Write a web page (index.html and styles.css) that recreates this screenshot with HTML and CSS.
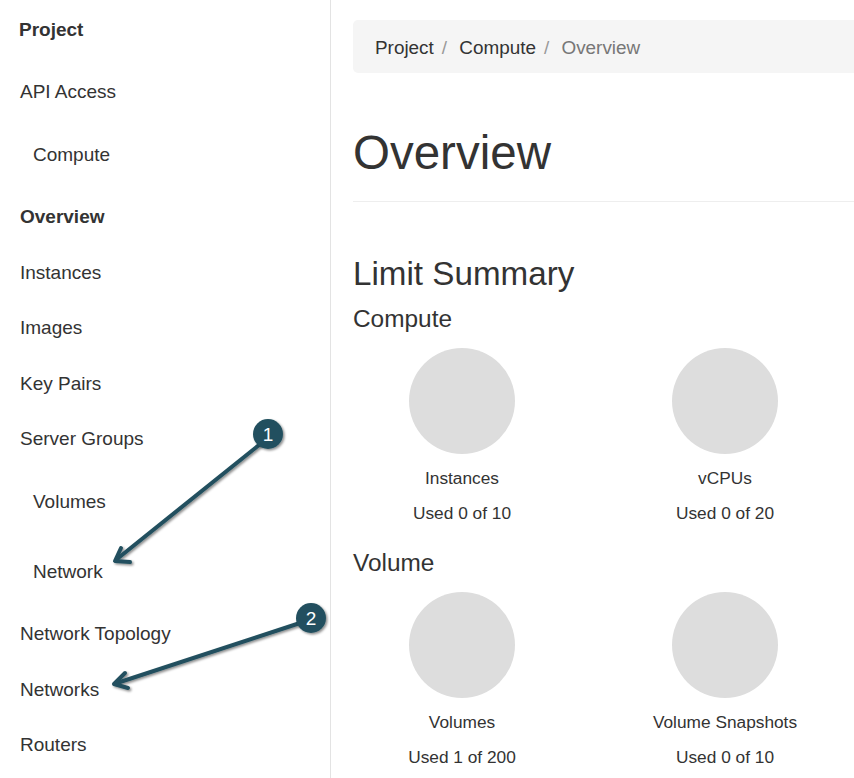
FILE: index.html
```html
<!DOCTYPE html>
<html lang="en">
<head>
  <meta charset="UTF-8" />
  <title>Overview</title>
  <link rel="stylesheet" href="styles.css">
</head>
<body>
  <div class="page">
    <nav class="sidebar">
      <div class="nav-title">Project</div>
      <div class="nav-link">API Access</div>
      <div class="nav-group">Compute</div>
      <div class="nav-link active">Overview</div>
      <div class="nav-link">Instances</div>
      <div class="nav-link">Images</div>
      <div class="nav-link">Key Pairs</div>
      <div class="nav-link">Server Groups</div>
      <div class="nav-group">Volumes</div>
      <div class="nav-group">Network</div>
      <div class="nav-link">Network Topology</div>
      <div class="nav-link">Networks</div>
      <div class="nav-link">Routers</div>
    </nav>

    <main class="content">
      <ol class="breadcrumb">
        <li>Project</li>
        <li>Compute</li>
        <li class="current">Overview</li>
      </ol>

      <h1 class="page-title">Overview</h1>

      <h2 class="summary-title">Limit Summary</h2>

      <h3 class="group-title">Compute</h3>
      <div class="charts">
        <div class="chart">
          <div class="pie"></div>
          <div class="chart-label">Instances</div>
          <div class="chart-used">Used 0 of 10</div>
        </div>
        <div class="chart">
          <div class="pie"></div>
          <div class="chart-label">vCPUs</div>
          <div class="chart-used">Used 0 of 20</div>
        </div>
      </div>

      <h3 class="group-title">Volume</h3>
      <div class="charts">
        <div class="chart">
          <div class="pie"></div>
          <div class="chart-label">Volumes</div>
          <div class="chart-used">Used 1 of 200</div>
        </div>
        <div class="chart">
          <div class="pie"></div>
          <div class="chart-label">Volume Snapshots</div>
          <div class="chart-used">Used 0 of 10</div>
        </div>
      </div>
    </main>
  </div>

  <!-- callouts drawn over the screenshot -->
  <svg class="callouts" width="854" height="778" viewBox="0 0 854 778">
    <defs>
      <filter id="shadow" x="-20%" y="-20%" width="140%" height="140%">
        <feDropShadow dx="1.5" dy="1.5" stdDeviation="1.2" flood-color="#000" flood-opacity="0.45"/>
      </filter>
    </defs>
    <g filter="url(#shadow)" fill="none" stroke="#22505e" stroke-width="4" stroke-linecap="round" stroke-linejoin="round">
      <line x1="264" y1="441" x2="117" y2="559"/>
      <polyline points="121,548 115,561 130,562"/>
      <line x1="300" y1="623" x2="117" y2="683"/>
      <polyline points="125,673 114,684 128,688"/>
    </g>
    <g filter="url(#shadow)">
      <circle cx="268" cy="434" r="15" fill="#22505e"/>
      <circle cx="311" cy="618" r="15" fill="#22505e"/>
    </g>
    <text x="268" y="441" class="callout-num">1</text>
    <text x="311" y="625" class="callout-num">2</text>
  </svg>
</body>
</html>
```

FILE: styles.css
```css
body { margin: 0; font-family: "Liberation Sans", Arial, sans-serif; color: #333; background: #fff; }
.page { display: flex; width: 854px; height: 778px; overflow: hidden; }

.sidebar { width: 330px; flex: none; border-right: 1px solid #e3e3e3; padding-top: 19px; display: flex; flex-direction: column; font-size: 19px; line-height: 22px; }
.nav-title { padding-left: 19px; font-weight: bold; }
.nav-link { padding-left: 20px; margin-top: 33.5px; }
.nav-link.active { font-weight: bold; }
.nav-group { padding-left: 33px; margin-top: 41px; }
.nav-title + .nav-link { margin-top: 40px; }
.nav-group + .nav-link { margin-top: 40px; }
.nav-group + .nav-group { margin-top: 48px; }

.content { flex: 1; padding: 20px 0 0 22px; min-width: 0; }

.breadcrumb { list-style: none; margin: 0; padding: 2px 22px 0; height: 51px; display: flex; align-items: center; background: #f5f5f5; border-radius: 5px 0 0 5px; font-size: 18.9px; margin-right: -2px; }
.breadcrumb li + li::before { content: "/\00a0"; padding: 0 7px 0 8px; color: #999; }
.breadcrumb .current { color: #777; }

.page-title { margin: 53.5px 0 0; font-size: 47.5px; font-weight: normal; line-height: 1.1; padding-bottom: 22px; border-bottom: 1px solid #eee; }

.summary-title { margin: 54px 0 0; font-size: 33.2px; font-weight: normal; line-height: 1.1; }
.group-title { margin: 13.5px 0 0; font-size: 24.4px; font-weight: normal; line-height: 1.1; }
.charts + .group-title { margin-top: 26.5px; }

.charts { display: grid; grid-template-columns: 218px 218px; column-gap: 45px; margin-top: 15.5px; }
.chart { display: flex; flex-direction: column; align-items: center; font-size: 17.3px; line-height: 20px; }
.pie { width: 106px; height: 106px; border-radius: 50%; background: #ddd; }
.chart-label { margin-top: 14px; }
.chart-used { margin-top: 15px; }

.callouts { position: absolute; top: 0; left: 0; pointer-events: none; }
.callout-num { fill: #fff; font-family: "Liberation Sans", Arial, sans-serif; font-size: 19px; text-anchor: middle; }
```
